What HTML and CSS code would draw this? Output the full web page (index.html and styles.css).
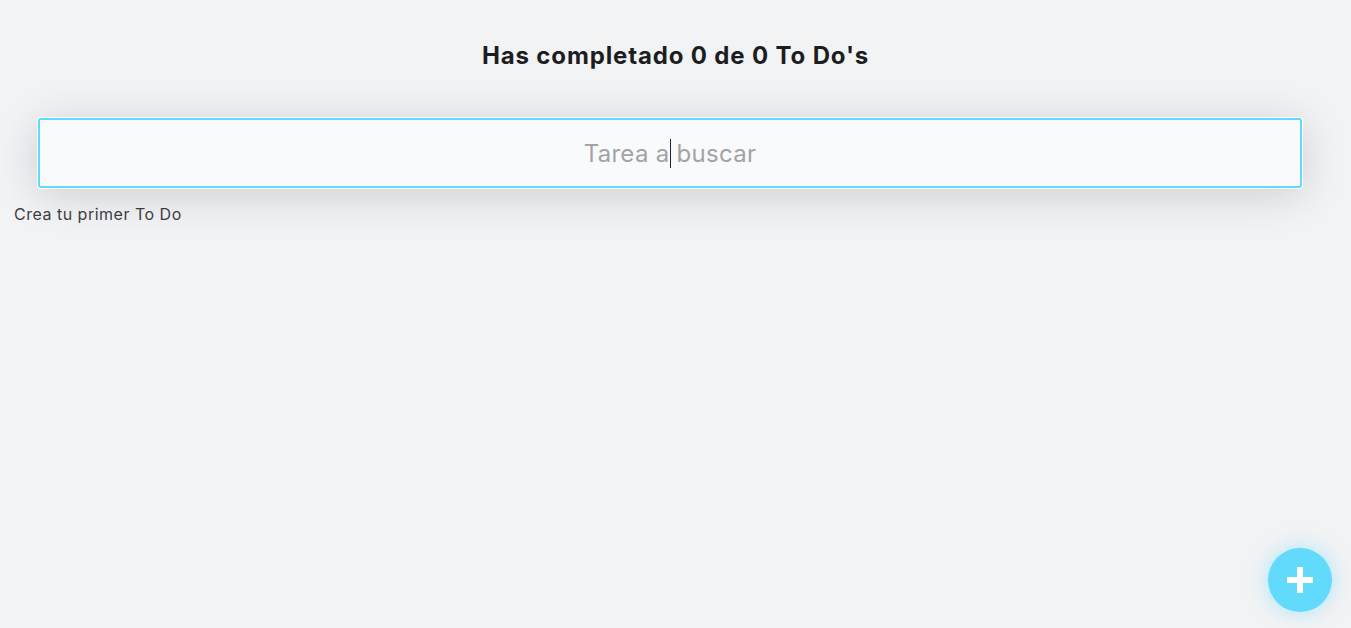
FILE: index.html
```html
<!DOCTYPE html>
<html lang="es">
<head>
<meta charset="utf-8">
<title>To Do</title>
<link rel="stylesheet" href="styles.css">
</head>
<body>
  <main class="app">
    <h1 class="counter">Has completado 0 de 0 To Do's</h1>
    <div class="search-wrap">
      <div class="search-box">
        <input class="search" type="text" placeholder="Tarea a buscar" autofocus>
        <span class="caret"></span>
      </div>
    </div>
    <p class="empty">Crea tu primer To Do</p>
  </main>
  <button class="fab" aria-label="Crear To Do">
    <svg width="28" height="28" viewBox="0 0 28 28"><path d="M11 1h6v10h10v6H17v10h-6V17H1v-6h10z" fill="#fff"/></svg>
  </button>
</body>
</html>
```
FILE: styles.css
```css
html, body {
  margin: 0;
  padding: 0;
  background: #f2f3f5;
  height: 100%;
  font-family: "Inter", "Open Sans", sans-serif;
}
.app {
  display: flex;
  flex-direction: column;
}
.counter {
  margin: 40px 0 0;
  text-align: center;
  font-size: 24px;
  font-weight: 700;
  line-height: 32px;
  color: #1d1d1f;
  letter-spacing: 0.85px;
}
.search-wrap {
  padding: 0 49px 0 38px;
  margin-top: 46px;
}
.search-box {
  position: relative;
}
.search {
  box-sizing: border-box;
  width: 100%;
  height: 70px;
  border: 2px solid #61dafb;
  border-radius: 3px;
  background: #f8fafc;
  box-shadow: 0 0 0 1px #ffffff, 0 6px 44px rgba(0,0,0,0.16);
  text-align: center;
  font-family: "Inter", "Open Sans", sans-serif;
  font-size: 24px;
  letter-spacing: 0.3px;
  color: #555;
  outline: none;
  caret-color: transparent;
}
.search::placeholder {
  color: #a3a3a6;
}
.caret {
  position: absolute;
  left: 50%;
  top: 21px;
  width: 1px;
  height: 29px;
  background: #222;
}
.empty {
  margin: 16px 0 0 14px;
  font-size: 16px;
  letter-spacing: 0.5px;
  color: #3f3f42;
}
.fab {
  position: fixed;
  right: 19px;
  bottom: 16px;
  width: 64px;
  height: 64px;
  border-radius: 50%;
  border: none;
  background: #61dafb;
  box-shadow: 0 0 20px rgba(97,218,251,0.5);
  display: flex;
  align-items: center;
  justify-content: center;
  padding: 0;
  cursor: pointer;
}
```
